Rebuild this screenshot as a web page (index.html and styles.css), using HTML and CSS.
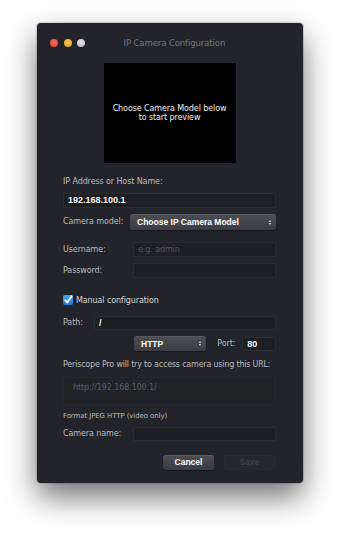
FILE: index.html
```html
<!DOCTYPE html>
<html>
<head>
<meta charset="utf-8">
<link rel="stylesheet" href="styles.css">
</head>
<body>
<div class="window">
  <div class="titlebar">
    <span class="light red"></span>
    <span class="light yellow"></span>
    <span class="light gray"></span>
    <span class="title">IP Camera Configuration</span>
  </div>
  <div class="content">
    <div class="preview">Choose Camera Model below<br>to start preview</div>
    <div class="label first">IP Address or Host Name:</div>
    <div class="field full value">192.168.100.1</div>
    <div class="row r-model">
      <span class="label">Camera model:</span>
      <div class="select model"><span>Choose IP Camera Model</span><span class="arrows"><i></i><i class="down"></i></span></div>
    </div>
    <div class="row r-user">
      <span class="label">Username:</span>
      <div class="field side placeholder">e.g. admin</div>
    </div>
    <div class="row r-pass">
      <span class="label">Password:</span>
      <div class="field side"></div>
    </div>
    <div class="row r-check">
      <span class="checkbox"><svg viewBox="0 0 10 10" width="10" height="10"><path d="M2.2 5.2 L4.3 7.6 L8.6 1.2" fill="none" stroke="#fff" stroke-width="1.8" stroke-linecap="round" stroke-linejoin="round"/></svg></span>
      <span class="checklabel">Manual configuration</span>
    </div>
    <div class="row r-path">
      <span class="label">Path:</span>
      <div class="field path value">/</div>
    </div>
    <div class="row r-proto">
      <div class="select proto"><span>HTTP</span><span class="arrows"><i></i><i class="down"></i></span></div>
      <span class="label port-label">Port:</span>
      <div class="field port value">80</div>
    </div>
    <div class="label info">Periscope Pro will try to access camera using this URL:</div>
    <div class="urlbox">http://192.168.100.1/</div>
    <div class="label format">Format JPEG HTTP (video only)</div>
    <div class="row r-name">
      <span class="label">Camera name:</span>
      <div class="field side"></div>
    </div>
    <div class="buttons">
      <span class="btn cancel">Cancel</span>
      <span class="btn save">Save</span>
    </div>
  </div>
</div>
</body>
</html>
```
FILE: styles.css
```css
html, body {
  margin: 0;
  padding: 0;
  background: #ffffff;
}
body {
  width: 340px;
  height: 536px;
  overflow: hidden;
  font-family: "DejaVu Sans", "Open Sans", sans-serif;
  font-size: 8px;
  letter-spacing: -0.1px;
  color: #b9bbbe;
}
.window {
  box-sizing: border-box;
  width: 266px;
  height: 460px;
  margin: 23px 0 0 37px;
  background: #222429;
  border-radius: 4px;
  box-shadow: 0 14px 30px rgba(0, 0, 0, 0.55), 0 0 0 1px rgba(0,0,0,0.15);
}
.titlebar {
  height: 40px;
  display: flex;
  align-items: center;
  padding-left: 13px;
}
.light {
  width: 8px;
  height: 8px;
  border-radius: 50%;
  margin-right: 5.5px;
}
.red { background: radial-gradient(circle at 50% 40%, #ff6a5e, #d9413a); }
.yellow { background: radial-gradient(circle at 50% 40%, #f7c94a, #d89e22); }
.gray { background: radial-gradient(circle at 50% 40%, #e4e4e4, #b8b8b8); }
.title {
  margin-left: 33px;
  font-size: 8.5px;
  color: #74777d;
}
.content {
  padding: 0 27px 0 26px;
}
.preview {
  width: 132px;
  height: 100px;
  margin: 0 auto;
  background: #000;
  color: #f2f2f2;
  line-height: 9px;
  display: flex;
  align-items: center;
  justify-content: center;
  text-align: center;
}
.label {
  line-height: 12px;
  color: #b9bbbe;
  white-space: nowrap;
}
.label.first { margin-top: 13px; }
.field {
  box-sizing: border-box;
  background: #1d1f23;
  border: 1px solid #2b2d32;
  height: 15px;
  line-height: 13px;
  padding-left: 4px;
  color: #f4f4f4;
}
.field.value {
  font-family: "Liberation Sans", Arial, sans-serif;
  font-weight: bold;
  font-size: 9px;
  letter-spacing: 0;
}
.field.full { margin-top: 5px; width: 213px; }
.field.placeholder { color: #55585e; }
.row {
  display: flex;
  align-items: center;
}
.row .label { width: 67px; flex: none; }
.r-model { margin-top: 6px; height: 16px; }
.select {
  box-sizing: border-box;
  height: 16px;
  border-radius: 3px;
  background: linear-gradient(#4d4f54, #3b3d41);
  box-shadow: inset 0 1px 0 rgba(255,255,255,0.08), 0 1px 1px rgba(0,0,0,0.4);
  color: #fff;
  font-family: "Liberation Sans", Arial, sans-serif;
  font-weight: bold;
  font-size: 8.5px;
  letter-spacing: 0;
  display: flex;
  align-items: center;
  justify-content: space-between;
  padding: 0 5px 0 7px;
}
.select.model { width: 146px; }
.arrows {
  display: flex;
  flex-direction: column;
  gap: 1px;
}
.arrows i {
  width: 0;
  height: 0;
  border-left: 1.5px solid transparent;
  border-right: 1.5px solid transparent;
  border-bottom: 2.5px solid #e8e8e8;
}
.arrows i.down {
  border-bottom: 0;
  border-top: 2.5px solid #e8e8e8;
}
.r-user { margin-top: 12px; }
.r-pass { margin-top: 6px; }
.field.side { width: 143px; margin-left: 3px; }
.r-check { margin-top: 16px; height: 12px; }
.checkbox {
  width: 10px;
  height: 10px;
  border-radius: 2px;
  background: linear-gradient(#4aa3f5, #1f78d6);
  display: flex;
}
.checklabel {
  margin-left: 3px;
  color: #d2d4d6;
}
.r-path { margin-top: 10px; }
.r-path .label { width: 31px; }
.field.path { width: 182px; height: 14px; line-height: 12px; }
.r-proto { margin-top: 6px; padding-left: 71px; }
.select.proto { width: 73px; height: 15px; }
.port-label { width: auto !important; margin-left: 11px; }
.field.port { width: 34px; margin-left: 7px; height: 14px; line-height: 12px; }
.label.info { margin-top: 8px; letter-spacing: -0.2px; }
.urlbox {
  box-sizing: border-box;
  margin-top: 6px;
  width: 212px;
  height: 28px;
  background: #202226;
  border: 1px solid #26282c;
  color: #5d6066;
  padding-left: 9px;
  line-height: 20px;
}
.label.format { margin-top: 5px; font-size: 7px; }
.r-name { margin-top: 5px; }
.r-name .field { height: 14px; }
.buttons {
  margin-top: 14px;
  display: flex;
  justify-content: flex-end;
  gap: 10px;
  padding-right: 1px;
}
.btn {
  box-sizing: border-box;
  width: 51px;
  height: 15px;
  border-radius: 3px;
  text-align: center;
  line-height: 15px;
  font-family: "Liberation Sans", Arial, sans-serif;
  font-weight: bold;
  font-size: 8.5px;
  letter-spacing: 0;
}
.cancel {
  background: linear-gradient(#4c4e53, #3a3c40);
  box-shadow: inset 0 1px 0 rgba(255,255,255,0.1), 0 1px 1px rgba(0,0,0,0.5);
  color: #fff;
}
.save {
  background: #25272b;
  border: 1px solid #2a2c30;
  color: #3f4246;
  line-height: 13px;
}
```
